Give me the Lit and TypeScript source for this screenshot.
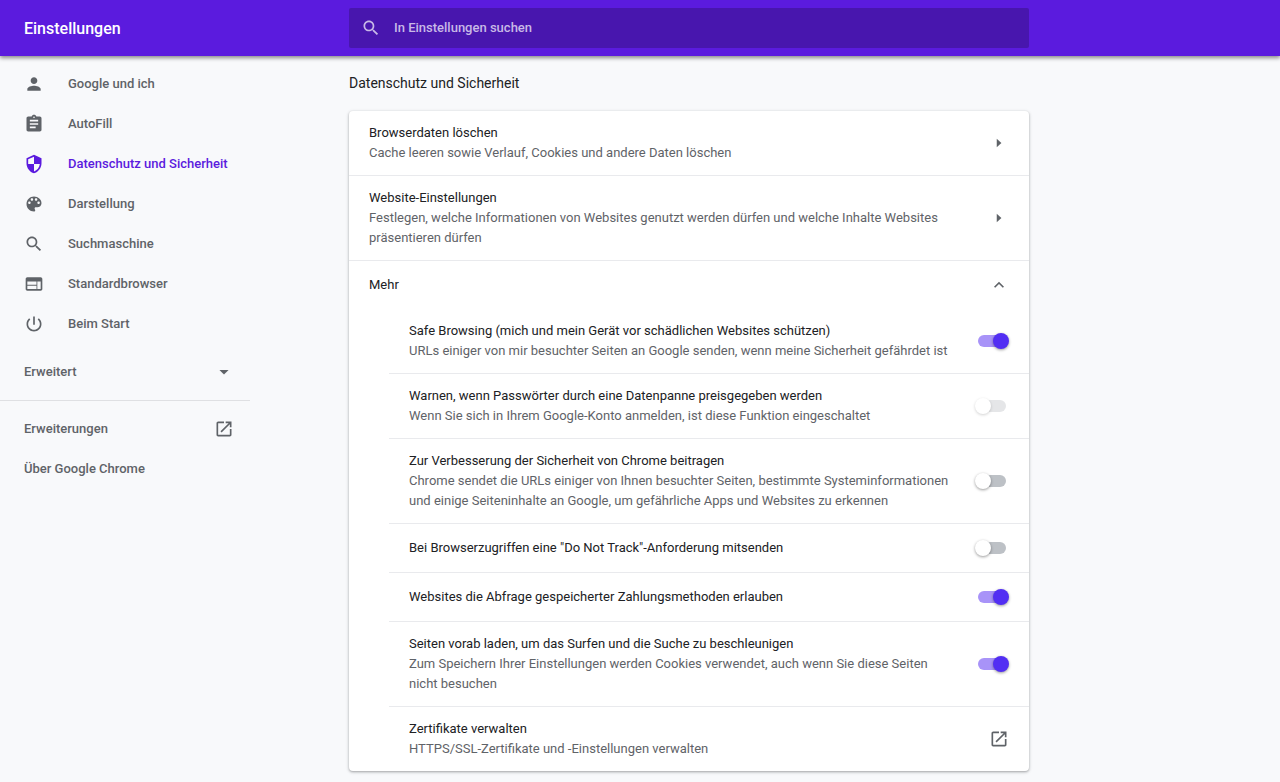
import { LitElement, html, css, svg, nothing } from "lit";
import { customElement, property, state } from "lit/decorators.js";

const ICONS: Record<string, string> = {
  person:
    "M12 12c2.21 0 4-1.79 4-4s-1.79-4-4-4-4 1.79-4 4 1.79 4 4 4zm0 2c-2.67 0-8 1.34-8 4v2h16v-2c0-2.66-5.33-4-8-4z",
  assignment:
    "M19 3h-4.18C14.4 1.84 13.3 1 12 1c-1.3 0-2.4.84-2.82 2H5c-1.1 0-2 .9-2 2v14c0 1.1.9 2 2 2h14c1.1 0 2-.9 2-2V5c0-1.1-.9-2-2-2zm-7 0c.55 0 1 .45 1 1s-.45 1-1 1-1-.45-1-1 .45-1 1-1zm2 14H7v-2h7v2zm3-4H7v-2h10v2zm0-4H7V7h10v2z",
  security:
    "M12 1L3 5v6c0 5.55 3.84 10.74 9 12 5.16-1.26 9-6.45 9-12V5l-9-4zm0 10.99h7c-.53 4.12-3.28 7.79-7 8.94V12H5V6.3l7-3.11v8.8z",
  palette:
    "M12 3c-4.97 0-9 4.03-9 9s4.03 9 9 9c.83 0 1.5-.67 1.5-1.5 0-.39-.15-.74-.39-1.01-.23-.26-.38-.61-.38-.99 0-.83.67-1.5 1.5-1.5H16c2.76 0 5-2.24 5-5 0-4.42-4.03-8-9-8zm-5.5 9c-.83 0-1.5-.67-1.5-1.5S5.67 9 6.5 9 8 9.67 8 10.5 7.33 12 6.5 12zm3-4C8.67 8 8 7.33 8 6.5S8.67 5 9.5 5s1.5.67 1.5 1.5S10.33 8 9.5 8zm5 0c-.83 0-1.5-.67-1.5-1.5S13.67 5 14.5 5s1.5.67 1.5 1.5S15.33 8 14.5 8zm3 4c-.83 0-1.5-.67-1.5-1.5S16.67 9 17.5 9s1.5.67 1.5 1.5-.67 1.5-1.5 1.5z",
  search:
    "M15.5 14h-.79l-.28-.27C15.41 12.59 16 11.11 16 9.5 16 5.91 13.09 3 9.5 3S3 5.91 3 9.5 5.91 16 9.5 16c1.61 0 3.09-.59 4.23-1.57l.27.28v.79l5 4.99L20.49 19l-4.99-5zm-6 0C7.01 14 5 11.99 5 9.5S7.01 5 9.5 5 14 7.01 14 9.5 11.99 14 9.5 14z",
  web: "M20 4H4c-1.1 0-1.99.9-1.99 2L2 18c0 1.1.9 2 2 2h16c1.1 0 2-.9 2-2V6c0-1.1-.9-2-2-2zm-5 14H4v-4h11v4zm0-5H4V9h11v4zm5 5h-4V9h4v9z",
  power:
    "M13 3h-2v10h2V3zm4.83 2.17l-1.42 1.42C17.99 7.86 19 9.81 19 12c0 3.87-3.13 7-7 7s-7-3.13-7-7c0-2.19 1.01-4.14 2.58-5.42L6.17 5.17C4.23 6.82 3 9.26 3 12c0 4.97 4.03 9 9 9s9-4.03 9-9c0-2.74-1.23-5.18-3.17-6.83z",
  launch:
    "M19 19H5V5h7V3H5c-1.11 0-2 .9-2 2v14c0 1.1.89 2 2 2h14c1.1 0 2-.9 2-2v-7h-2v7zM14 3v2h3.59l-9.83 9.83 1.41 1.41L19 6.41V10h2V3h-7z",
  dropdown: "M6.5 9.5l5.5 5.5 5.5-5.5z",
  arrow: "M9.3 6.8l5.6 5.2-5.6 5.2z",
  up: "M12 8l-6 6 1.41 1.41L12 10.83l4.59 4.58L18 14z",
};

const icon = (name: string) => html`
  <svg class="icon" viewBox="0 0 24 24" aria-hidden="true">
    ${svg`<path d=${ICONS[name]}></path>`}
  </svg>
`;

const iconStyles = css`
  .icon {
    display: block;
    flex: none;
    width: 20px;
    height: 20px;
    fill: currentColor;
  }
`;

@customElement("settings-toolbar")
class SettingsToolbar extends LitElement {
  static styles = [
    iconStyles,
    css`
      :host {
        display: block;
        position: relative;
        z-index: 1;
        background: #5b1bde;
        color: #fff;
        box-shadow: 0 2px 4px rgba(0, 0, 0, 0.45);
      }
      .bar {
        display: grid;
        grid-template-columns: var(--page-columns);
        align-items: center;
        height: 56px;
      }
      .title {
        margin: 0;
        padding: 2px 0 0 24px;
        font-size: 16px;
        font-weight: 500;
        line-height: 24px;
      }
      .search {
        display: flex;
        align-items: center;
        height: 40px;
        padding: 0 12px;
        gap: 13px;
        border-radius: 2px;
        background: #4816ae;
        color: #c8b9e7;
      }
      .field {
        flex: 1;
        min-width: 0;
        padding: 0;
        border: 0;
        outline: 0;
        background: none;
        color: #fff;
        font: 500 13px/20px Roboto, sans-serif;
      }
      .field::placeholder {
        color: #c8b9e7;
        opacity: 1;
      }
    `,
  ];

  render() {
    return html`
      <header class="bar">
        <h1 class="title">Einstellungen</h1>
        <label class="search">
          ${icon("search")}
          <input
            class="field"
            type="text"
            aria-label="In Einstellungen suchen"
            placeholder="In Einstellungen suchen"
          />
        </label>
      </header>
    `;
  }
}

const MENU = [
  { icon: "person", label: "Google und ich" },
  { icon: "assignment", label: "AutoFill" },
  { icon: "security", label: "Datenschutz und Sicherheit" },
  { icon: "palette", label: "Darstellung" },
  { icon: "search", label: "Suchmaschine" },
  { icon: "web", label: "Standardbrowser" },
  { icon: "power", label: "Beim Start" },
];

@customElement("settings-menu")
class SettingsMenu extends LitElement {
  @state() selected = 2;

  static styles = [
    iconStyles,
    css`
      :host {
        display: block;
        width: 250px;
        color: #5f6368;
      }
      .menu {
        display: flex;
        flex-direction: column;
        padding: 8px 0;
      }
      .item {
        display: flex;
        align-items: center;
        gap: 24px;
        box-sizing: border-box;
        width: 100%;
        height: 40px;
        padding: 0 16px 0 24px;
        border: 0;
        background: none;
        color: inherit;
        font: 500 13px/20px Roboto, sans-serif;
        text-align: left;
        text-decoration: none;
        cursor: pointer;
      }
      .item.selected {
        color: #5b1bde;
      }
      .spread {
        justify-content: space-between;
      }
      .advanced {
        margin: 8px 0;
      }
      .rule {
        width: 100%;
        height: 1px;
        margin: 0 0 8px;
        border: 0;
        background: #dfe0e3;
      }
    `,
  ];

  render() {
    return html`
      <nav class="menu">
        ${MENU.map(
          (m, i) => html`
            <a
              class="item ${i === this.selected ? "selected" : ""}"
              href="#"
              @click=${(e: Event) => {
                e.preventDefault();
                this.selected = i;
              }}
              >${icon(m.icon)}<span>${m.label}</span></a
            >
          `
        )}
        <button class="item spread advanced" type="button">
          <span>Erweitert</span>${icon("dropdown")}
        </button>
        <hr class="rule" />
        <a class="item spread" href="#"><span>Erweiterungen</span>${icon("launch")}</a>
        <a class="item" href="#"><span>Über Google Chrome</span></a>
      </nav>
    `;
  }
}

@customElement("settings-row")
class SettingsRow extends LitElement {
  @property() heading = "";
  @property() detail = "";
  @property() kind = "toggle";
  @property({ type: Boolean }) on = false;
  @property({ type: Boolean }) locked = false;

  static styles = [
    iconStyles,
    css`
      :host {
        display: block;
      }
      .row {
        display: flex;
        align-items: center;
        justify-content: space-between;
        box-sizing: border-box;
        width: 100%;
        min-height: 48px;
        padding: 12px 20px;
        border: 0;
        background: none;
        color: #5f6368;
        font: 400 13px/20px Roboto, sans-serif;
        text-align: left;
        text-decoration: none;
        cursor: pointer;
      }
      .text {
        flex: 0 1 580px;
        padding-right: 20px;
      }
      .heading,
      .detail {
        display: block;
      }
      .heading {
        color: #202124;
      }
      .switch {
        appearance: none;
        position: relative;
        flex: none;
        width: 34px;
        height: 16px;
        margin: 0;
        cursor: pointer;
      }
      .switch::before {
        content: "";
        position: absolute;
        inset: 2px 3px;
        border-radius: 6px;
        background: #bdc1c6;
      }
      .switch::after {
        content: "";
        position: absolute;
        left: 0;
        width: 16px;
        height: 16px;
        border-radius: 50%;
        background: #fff;
        box-shadow: 0 1px 3px rgba(0, 0, 0, 0.4);
      }
      .switch:checked::before {
        background: #a893f8;
      }
      .switch:checked::after {
        left: auto;
        right: 0;
        background: #522ef3;
      }
      .switch:disabled::before {
        background: #e5e6e8;
      }
      .switch:disabled::after {
        box-shadow: 0 1px 3px rgba(0, 0, 0, 0.18);
      }
    `,
  ];

  private text() {
    return html`
      <span class="text">
        <span class="heading">${this.heading}</span>
        ${this.detail ? html`<span class="detail">${this.detail}</span>` : nothing}
      </span>
    `;
  }

  render() {
    if (this.kind === "toggle") {
      return html`
        <label class="row">
          ${this.text()}
          <input
            class="switch"
            type="checkbox"
            .checked=${this.on}
            ?disabled=${this.locked}
          />
        </label>
      `;
    }
    if (this.kind === "launch") {
      return html`<a class="row" href="#">${this.text()}${icon("launch")}</a>`;
    }
    return html`
      <button class="row" type="button">${this.text()}${icon(this.kind)}</button>
    `;
  }
}

const MAIN_ROWS = [
  {
    kind: "arrow",
    heading: "Browserdaten löschen",
    detail: "Cache leeren sowie Verlauf, Cookies und andere Daten löschen",
  },
  {
    kind: "arrow",
    heading: "Website-Einstellungen",
    detail:
      "Festlegen, welche Informationen von Websites genutzt werden dürfen und welche Inhalte Websites präsentieren dürfen",
  },
  { kind: "up", heading: "Mehr", detail: "" },
];

const MORE_ROWS = [
  {
    kind: "toggle",
    heading: "Safe Browsing (mich und mein Gerät vor schädlichen Websites schützen)",
    detail:
      "URLs einiger von mir besuchter Seiten an Google senden, wenn meine Sicherheit gefährdet ist",
    on: true,
  },
  {
    kind: "toggle",
    heading: "Warnen, wenn Passwörter durch eine Datenpanne preisgegeben werden",
    detail: "Wenn Sie sich in Ihrem Google-Konto anmelden, ist diese Funktion eingeschaltet",
    locked: true,
  },
  {
    kind: "toggle",
    heading: "Zur Verbesserung der Sicherheit von Chrome beitragen",
    detail:
      "Chrome sendet die URLs einiger von Ihnen besuchter Seiten, bestimmte Systeminformationen und einige Seiteninhalte an Google, um gefährliche Apps und Websites zu erkennen",
  },
  {
    kind: "toggle",
    heading: 'Bei Browserzugriffen eine "Do Not Track"-Anforderung mitsenden',
  },
  {
    kind: "toggle",
    heading: "Websites die Abfrage gespeicherter Zahlungsmethoden erlauben",
    on: true,
  },
  {
    kind: "toggle",
    heading: "Seiten vorab laden, um das Surfen und die Suche zu beschleunigen",
    detail:
      "Zum Speichern Ihrer Einstellungen werden Cookies verwendet, auch wenn Sie diese Seiten nicht besuchen",
    on: true,
  },
  {
    kind: "launch",
    heading: "Zertifikate verwalten",
    detail: "HTTPS/SSL-Zertifikate und -Einstellungen verwalten",
  },
];

@customElement("app-root")
class AppRoot extends LitElement {
  static styles = css`
    :host {
      --page-columns: minmax(250px, 349fr) minmax(0, 680px) minmax(0, 251fr);
      display: block;
      min-height: 100vh;
      background: #f8f9fb;
      color: #202124;
      font: 400 13px/20px Roboto, sans-serif;
    }
    .page {
      display: grid;
      grid-template-columns: var(--page-columns);
    }
    .section-title {
      margin: 0;
      padding: 17px 0 18px;
      font-size: 14px;
      font-weight: 400;
      line-height: 20px;
    }
    .card {
      margin-bottom: 11px;
      border-radius: 4px;
      background: #fff;
      box-shadow: 0 1px 2px rgba(60, 64, 67, 0.3), 0 1px 3px 1px rgba(60, 64, 67, 0.15);
    }
    .line + .line {
      border-top: 1px solid #e9eaed;
    }
    .more {
      margin-left: 40px;
    }
  `;

  private row(r: any) {
    return html`
      <settings-row
        class="line"
        .kind=${r.kind}
        .heading=${r.heading}
        .detail=${r.detail ?? ""}
        .on=${r.on ?? false}
        .locked=${r.locked ?? false}
      ></settings-row>
    `;
  }

  render() {
    return html`
      <settings-toolbar></settings-toolbar>
      <div class="page">
        <settings-menu></settings-menu>
        <main>
          <h2 class="section-title">Datenschutz und Sicherheit</h2>
          <section class="card">
            ${MAIN_ROWS.map((r) => this.row(r))}
            <div class="more">${MORE_ROWS.map((r) => this.row(r))}</div>
          </section>
        </main>
      </div>
    `;
  }
}
